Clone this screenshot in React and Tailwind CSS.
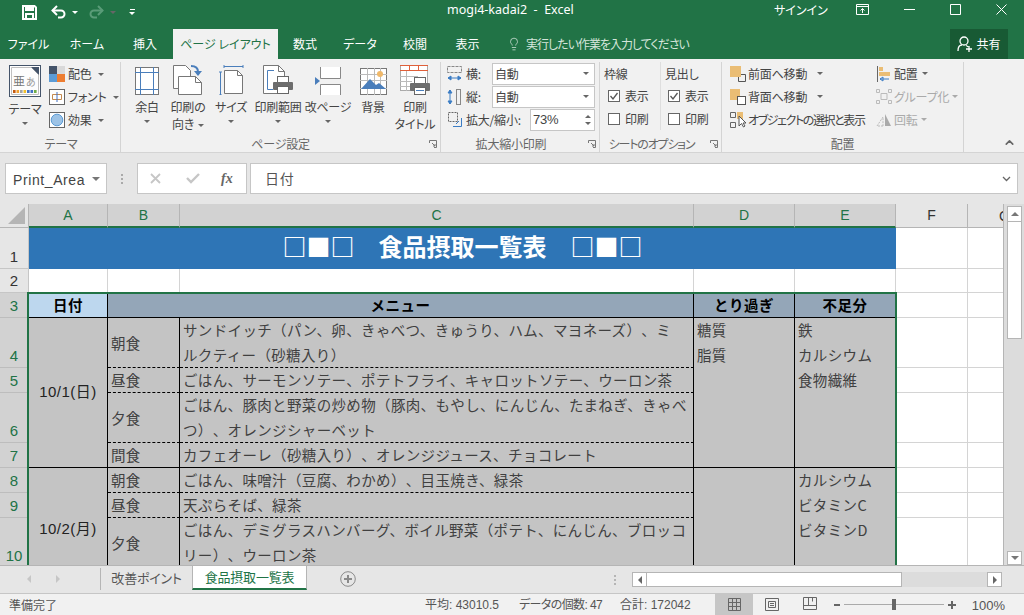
import { ChevronUp, Lightbulb } from 'lucide-react';

const JP = "font-['Noto_Sans_CJK_JP','Noto_Sans',sans-serif]";
const PALT = "[font-feature-settings:'palt']";
const COLS = 'grid-cols-[29px_79px_72px_514px_101px_101px_72px_35px]';

function Caret({ className = '' }) {
  return <span className={`inline-block w-0 h-0 border-x-[3px] border-x-transparent border-t-[3px] border-t-[#666] align-middle ${className}`} />;
}

function SaveIcon() {
  return (
    <svg width="15" height="15" viewBox="0 0 15 15" fill="none" stroke="#fff" strokeWidth="2">
      <path d="M1 1h11.500l1.500 1.500V14H1z" />
      <path d="M4 1v4h7V1" fill="#fff" />
      <path d="M4 14V9h7v5" />
    </svg>
  );
}

function UndoIcon({ color = '#fff', flip }) {
  return (
    <svg className={flip ? '-scale-x-100' : ''} width="16" height="14" viewBox="0 0 16 14" fill="none" stroke={color} strokeWidth="2">
      <path d="M1.500 5.500h8.500a3.500 3.500 0 0 1 0 7H7" />
      <path d="M6 1 1.500 5.500 6 10" />
    </svg>
  );
}

function ThemeIcon() {
  return (
    <svg width="32" height="32" viewBox="0 0 32 32">
      <rect x="0.500" y="0.500" width="31" height="31" fill="#fff" stroke="#44546a" />
      <path d="M2.500 2.500h20l7 7v20h-27z" fill="#fdfdfd" stroke="#c0c0c0" />
      <path d="M22 2h8v8z" fill="#44546a" />
      <text x="4" y="21" fontSize="12" fill="#777">亜</text>
      <text x="17" y="21" fontSize="10" fill="#999">あ</text>
      {['#c55a11', '#f0a030', '#a5a5a5', '#f0c030', '#4472c4', '#4472c4', '#70ad47'].map((c, i) => (
        <rect key={i} x={4 + i * 3.500} y="25" width="2.600" height="3" fill={c} />
      ))}
    </svg>
  );
}

function ColorIcon() {
  return (
    <svg width="16" height="16" viewBox="0 0 16 16">
      <rect width="8" height="8" fill="#44546a" />
      <rect x="8" width="8" height="8" fill="#d9d9d9" />
      <rect y="8" width="8" height="8" fill="#5b9bd5" />
      <rect x="8" y="8" width="8" height="8" fill="#ed7d31" />
    </svg>
  );
}

function FontIcon() {
  return (
    <svg width="16" height="16" viewBox="0 0 16 16" fill="none">
      <rect x="0.500" y="0.500" width="15" height="15" fill="#fff" stroke="#666" />
      <path d="M3.500 5.500h9v5h-9z" stroke="#c58a50" />
      <path d="M8 3v10" stroke="#4472c4" />
    </svg>
  );
}

function EffectIcon() {
  return (
    <svg width="16" height="16" viewBox="0 0 16 16">
      <rect x="0.500" y="0.500" width="15" height="15" fill="#fff" stroke="#666" />
      <circle cx="8" cy="8" r="5.800" fill="#9dc3e6" stroke="#5b9bd5" />
    </svg>
  );
}

function MarginIcon() {
  return (
    <svg width="24" height="28" viewBox="0 0 24 28" fill="#fff">
      <rect x="0.500" y="0.500" width="23" height="27" stroke="#777" />
      <path d="M5.500 0v28M18.500 0v28M0 5.500h24M0 22.500h24" stroke="#4a7ebb" fill="none" />
    </svg>
  );
}

function OrientIcon() {
  return (
    <svg width="30" height="30" viewBox="0 0 30 30" fill="#fff" stroke="#777">
      <path d="M.500.500h12l5 5v18H.500z" />
      <path d="M5.500 11.500h17l6 6v12h-23z" />
      <path d="M22.500 11.500v6h6" fill="none" />
      <path d="M18 1c4 0 7 1 7 6" stroke="#4a7ebb" strokeWidth="2" fill="none" />
      <path d="M21 6h8l-4 5z" fill="#4a7ebb" stroke="none" />
    </svg>
  );
}

function SizeIcon() {
  return (
    <svg width="25" height="30" viewBox="0 0 25 30" fill="none">
      <path d="M5 1.500h19M5 0v3M24 0v3M1.500 7v23M0 7h3M0 30h3" stroke="#4a7ebb" />
      <path d="M5.500 5.500h13l5 5v18h-18z" fill="#fff" stroke="#777" />
      <path d="M18.500 5.500v5h5" stroke="#777" />
    </svg>
  );
}

function Printer({ x, y, line }) {
  return (
    <g transform={`translate(${x} ${y})`}>
      <rect x="4.500" y="0.500" width="11" height="6" fill="#fff" stroke="#666" />
      <rect x="0" y="6" width="20" height="8" rx="1" fill="#6d6d6d" />
      <rect x="4.500" y="10.500" width="11" height="7" fill="#fff" stroke="#666" />
      {line && <path d="M6 13.500h8" stroke="#4a7ebb" />}
    </g>
  );
}

function PrintAreaIcon() {
  return (
    <svg width="31" height="30" viewBox="0 0 31 30" fill="none">
      <path d="M.500.500h15l6 6v22H.500z" fill="#fff" stroke="#777" />
      <path d="M15.500.500v6h6" stroke="#777" />
      <path d="M11 5.500H4.500v19H10" stroke="#4a7ebb" />
      <Printer x={10} y={11} />
    </svg>
  );
}

function BreakIcon() {
  return (
    <svg width="26" height="28" viewBox="0 0 26 28" fill="#fff" stroke="#888">
      <path d="M5.500 0v11.500h20V0M5.500 28V17.500h20V28" />
      <path d="M0 10l5 4-5 4z" fill="#4a7ebb" stroke="none" />
    </svg>
  );
}

function BackgroundIcon() {
  return (
    <svg width="27" height="27" viewBox="0 0 27 27">
      <rect x="0.500" y="0.500" width="26" height="26" fill="#fff" stroke="#777" />
      <path d="M0 6.500h27M0 12.500h27M0 20.500h27M7.500 0v27M14.500 0v27M20.500 0v27" stroke="#bbb" />
      <circle cx="20" cy="6" r="3" fill="#f0b869" />
      <path d="M1 21 10 11l6 6 3-2 7 6z" fill="#4a7ebb" />
    </svg>
  );
}

function TitlesIcon() {
  return (
    <svg width="30" height="30" viewBox="0 0 30 30" fill="none">
      <rect x="0.500" y="0.500" width="27" height="25" fill="#fff" stroke="#aaa" />
      <path d="M0 .500h28M0 5.500h28M9.500 0v6M18.500 0v6" stroke="#e0603a" />
      <path d="M0 11.500h18M0 16.500h12M0 21.500h10M6.500 6v20" stroke="#bbb" />
      <Printer x={10} y={12} line />
    </svg>
  );
}

function BigButton({ icon, lines, caretInline, caretBelow, width, iconH = 'h-[33px]' }) {
  return (
    <div className={`flex flex-col items-center shrink-0 ${width}`}>
      <div className={`${iconH} flex items-end justify-center`}>{icon}</div>
      <div className="mt-[3px] text-[12px] leading-[17px] text-[#444] text-center whitespace-nowrap">
        {lines.map((l, i) => (
          <div key={l}>
            {l}
            {caretInline && i === lines.length - 1 && <Caret className="ml-1" />}
          </div>
        ))}
        {caretBelow && <div className="h-[13px] flex items-center justify-center"><Caret /></div>}
      </div>
    </div>
  );
}

function RibbonGroup({ label, labelClass = '', width, launcher, children, className = '' }) {
  return (
    <div className={`relative shrink-0 h-[90px] border-r border-[#d4d4d4] ${width} ${className}`}>
      {children}
      <div className={`absolute bottom-0 inset-x-0 text-center text-[12px] leading-[16px] text-[#666] whitespace-nowrap ${labelClass}`}>{label}</div>
      {launcher && (
        <svg className="absolute right-[3px] bottom-[4px]" width="8" height="8" viewBox="0 0 8 8" fill="none" stroke="#777">
          <path d="M.500 3V.500H7.500V7.500H5M3 3l3 3M6 4v2H4" />
        </svg>
      )}
    </div>
  );
}

function Check({ checked, label }) {
  return (
    <div className="flex items-center gap-[5px] h-[23px] text-[12px] text-[#444] whitespace-nowrap">
      <span className="w-[12px] h-[12px] border border-[#666] bg-white flex items-center justify-center">
        {checked && (
          <svg width="10" height="10" viewBox="0 0 10 10" fill="none" stroke="#555" strokeWidth="1.300"><path d="M1.500 5l2.500 3 4.500-6" /></svg>
        )}
      </span>
      {label}
    </div>
  );
}

function AutoSelect({ label, icon }) {
  return (
    <div className="flex items-center h-[23px] text-[12px] text-[#444]">
      <span className="w-[19px] flex">{icon}</span>
      <span className="w-[26px]">{label}</span>
      <span className="w-[103px] h-[22px] bg-white border border-[#c6c6c6] flex items-center justify-between pl-[2px] pr-[5px]">
        自動<Caret />
      </span>
    </div>
  );
}

function ArrangeRow({ icon, label, caret, muted, labelClass = '' }) {
  return (
    <div className={`flex items-center h-[23px] text-[12px] whitespace-nowrap ${muted ? 'text-[#aaa]' : 'text-[#444]'}`}>
      <span className="w-[16px] flex justify-center mr-[2px]">{icon}</span>
      <span className={labelClass}>{label}</span>
      {caret && <Caret className={caret} />}
    </div>
  );
}

function Ribbon() {
  return (
    <div className={`h-[94px] bg-[#f1f1f1] border-b border-[#d4d4d4] flex pt-[3px] pl-[2px] relative tracking-[-0.2px] ${PALT} ${JP}`}>
      <RibbonGroup label="テーマ" width="w-[119px]" className="flex">
        <BigButton icon={<ThemeIcon />} lines={['テーマ']} caretBelow width="w-[46px]" iconH="h-[35px]" />
        <div className="flex flex-col pt-[4px] ml-[1px] text-[12px] text-[#444] gap-[7px] whitespace-nowrap">
          <div className="flex items-center gap-[3px] h-[16px]"><ColorIcon />配色<Caret className="ml-[3px]" /></div>
          <div className="flex items-center gap-[3px] h-[16px]"><FontIcon />フォント<Caret className="ml-[3px]" /></div>
          <div className="flex items-center gap-[3px] h-[16px]"><EffectIcon />効果<Caret className="ml-[3px]" /></div>
        </div>
      </RibbonGroup>
      <RibbonGroup label="ページ設定" width="w-[320px]" launcher className="flex pl-[4px]">
        <BigButton icon={<MarginIcon />} lines={['余白']} caretBelow width="w-[44px]" />
        <BigButton icon={<OrientIcon />} lines={['印刷の', '向き']} caretInline width="w-[38px]" />
        <BigButton icon={<SizeIcon />} lines={['サイズ']} caretBelow width="w-[48px]" />
        <BigButton icon={<PrintAreaIcon />} lines={['印刷範囲']} caretBelow width="w-[46px]" />
        <BigButton icon={<BreakIcon />} lines={['改ページ']} caretBelow width="w-[54px]" />
        <BigButton icon={<BackgroundIcon />} lines={['背景']} width="w-[36px]" />
        <BigButton icon={<TitlesIcon />} lines={['印刷', 'タイトル']} width="w-[48px]" />
      </RibbonGroup>
      <RibbonGroup label="拡大縮小印刷" labelClass="pr-[18px]" width="w-[159px]" launcher className="pl-[6px]">
        <AutoSelect
          label="横:"
          icon={<svg width="15" height="17" viewBox="0 0 15 17" fill="none"><path d="M.500 1.500h14v6H.500z" stroke="#888" strokeDasharray="3 1" /><path d="M1 13h13M1 13l3-2v4zM14 13l-3-2v4z" stroke="#3b7cc4" fill="#3b7cc4" /></svg>}
        />
        <AutoSelect
          label="縦:"
          icon={<svg width="15" height="17" viewBox="0 0 15 17" fill="none"><rect x="9.500" y="1.500" width="4" height="15" stroke="#888" /><path d="M3 2v14M3 2 1 5h4zM3 16l-2-3h4z" stroke="#3b7cc4" fill="#3b7cc4" /></svg>}
        />
        <div className="flex items-center h-[23px] text-[12px] text-[#444] whitespace-nowrap">
          <svg className="ml-[1px] mr-[4px]" width="14" height="15" viewBox="0 0 14 15" fill="none"><path d="M.500.500h9v9h-9z" stroke="#666" strokeDasharray="2 1" /><path d="M13.500 6v8.500H5M8 12l3-3" stroke="#3b7cc4" /></svg>
          <span className="w-[64px]">拡大/縮小:</span>
          <span className="w-[65px] h-[22px] bg-white border border-[#c6c6c6] flex items-center justify-between pl-[2px] pr-[3px] font-['Liberation_Sans',sans-serif] text-[13px]">
            73%
            <span className="flex flex-col gap-[4px]">
              <span className="w-0 h-0 border-x-[3px] border-x-transparent border-b-[3px] border-b-[#666]" />
              <Caret />
            </span>
          </span>
        </div>
      </RibbonGroup>
      <RibbonGroup label="シートのオプション" labelClass="pr-[18px] tracking-[-1.2px]" width="w-[122px]" launcher className="flex pl-[4px]">
        <div className="w-[57px] border-r border-[#dedede] h-[68px]">
          <div className="h-[22px] text-[12px] leading-[24px] text-[#444]">枠線</div>
          <div className="pl-[4px]"><Check checked label="表示" /><Check label="印刷" /></div>
        </div>
        <div className="pl-[4px]">
          <div className="h-[22px] text-[12px] leading-[24px] text-[#444] whitespace-nowrap">見出し</div>
          <div className="pl-[3px]"><Check checked label="表示" /><Check label="印刷" /></div>
        </div>
      </RibbonGroup>
      <RibbonGroup label="配置" width="w-[242px]" className="flex pl-[8px]">
        <div className="w-[146px]">
          <ArrangeRow
            label="前面へ移動"
            caret="ml-[10px]"
            icon={<svg width="16" height="16" viewBox="0 0 16 16"><path d="M8.500 11v4.500H15.500v-7H11" fill="none" stroke="#555" /><rect width="11" height="11" fill="#eabd74" /></svg>}
          />
          <ArrangeRow
            label="背面へ移動"
            caret="ml-[10px]"
            icon={<svg width="16" height="16" viewBox="0 0 16 16"><rect width="10" height="11" fill="#eabd74" /><rect x="7.500" y="7.500" width="8" height="8" fill="#fff" stroke="#555" /></svg>}
          />
          <ArrangeRow
            label="オブジェクトの選択と表示"
            labelClass="tracking-[-1.4px]"
            icon={<svg width="16" height="16" viewBox="0 0 16 16" fill="none"><path d="M.500.500h5v5h-5zM.500 10.500h5v5h-5z" stroke="#666" /><rect x="7" y="0" width="6" height="7" fill="#eabd74" /><path d="M9 4v10l2.500-2.500 2 3.500 1.500-1-2-3h3z" fill="#fff" stroke="#555" /></svg>}
          />
        </div>
        <div>
          <ArrangeRow
            label="配置"
            caret="ml-[4px]"
            icon={<svg width="14" height="16" viewBox="0 0 14 16" fill="none"><path d="M.500 0v16" stroke="#666" /><rect x="2" y="1" width="4" height="4" fill="#eabd74" /><rect x="2" y="6" width="11" height="4" fill="#eabd74" /><path d="M3 13h9M3 13l3-2v4z" stroke="#3b7cc4" /></svg>}
          />
          <ArrangeRow
            muted
            label="グループ化"
            caret="ml-[3px] border-t-[#aaa]"
            icon={<svg width="16" height="15" viewBox="0 0 16 15" fill="none" stroke="#bbb"><path d="M.500.500h3v3h-3zM12.500.500h3v3h-3zM.500 11.500h3v3h-3zM12.500 11.500h3v3h-3zM5 4.500h6v6H5z" /></svg>}
          />
          <ArrangeRow
            muted
            label="回転"
            caret="ml-[3px] border-t-[#aaa]"
            icon={<svg width="16" height="14" viewBox="0 0 16 14"><path d="M9 13V1l6 12z" fill="#aaa" /><path d="M7 13H1l6-9z" fill="none" stroke="#bbb" strokeDasharray="2 1" /></svg>}
          />
        </div>
      </RibbonGroup>
      <ChevronUp className="absolute right-[8px] bottom-[3px] text-[#666]" size={13} strokeWidth={3} />
    </div>
  );
}

function TitleBar() {
  return (
    <div className="h-[29px] bg-[#217346] flex items-center text-white relative">
      <div className="flex items-center pl-[22px] -mt-[5px]">
        <SaveIcon />
        <span className="ml-[14px]"><UndoIcon /></span>
        <Caret className="ml-[5px] border-t-white" />
        <span className="ml-[10px]"><UndoIcon flip color="#5a9c78" /></span>
        <Caret className="ml-[6px] border-t-[#5a9c78]" />
        <span className="ml-[13px] flex flex-col items-center gap-[2px]">
          <span className="w-[5px] h-px bg-white" />
          <Caret className="border-t-white" />
        </span>
      </div>
      <div className="absolute left-[447px] top-0 text-[12.5px] leading-[19px] font-['Noto_Sans',sans-serif] whitespace-pre">mogi4-kadai2  -  Excel</div>
      <div className={`absolute left-[774px] top-0 text-[12px] leading-[19px] ${PALT} ${JP}`}>サインイン</div>
      <svg className="absolute left-[856px] top-[4px]" width="13" height="11" viewBox="0 0 13 11" fill="none" stroke="#fff"><path d="M.500.500h12v10H.500zM.500 2.500h12M6.500 9V4.500M4.500 6.500l2-2 2 2" /></svg>
      <svg className="absolute left-[904px] top-[9px]" width="11" height="1" viewBox="0 0 11 1" stroke="#fff"><path d="M0 .500h11" /></svg>
      <svg className="absolute left-[950px] top-[4px]" width="11" height="11" viewBox="0 0 11 11" fill="none" stroke="#fff"><path d="M.500.500h10v10H.500z" /></svg>
      <svg className="absolute left-[996px] top-[4px]" width="11" height="11" viewBox="0 0 11 11" fill="none" stroke="#fff"><path d="M.500.500l10 10M10.500.500l-10 10" /></svg>
    </div>
  );
}

const TABS = [
  { label: 'ファイル', w: 'w-[57px]' },
  { label: 'ホーム', w: 'w-[60px]' },
  { label: '挿入', w: 'w-[56px]' },
];
const TABS_RIGHT = [
  { label: '数式', w: 'w-[54px]' },
  { label: 'データ', w: 'w-[56px]' },
  { label: '校閲', w: 'w-[54px]' },
  { label: '表示', w: 'w-[51px]' },
];

function TabRow() {
  return (
    <div className={`h-[30px] bg-[#217346] flex items-stretch text-[12px] text-white ${PALT} ${JP}`}>
      {TABS.map((t) => (
        <div key={t.label} className={`${t.w} flex items-center justify-center`}>{t.label}</div>
      ))}
      <div className="w-[105px] bg-[#f1f1f1] text-[#217346] flex items-center justify-center whitespace-nowrap">ページ レイアウト</div>
      {TABS_RIGHT.map((t) => (
        <div key={t.label} className={`${t.w} flex items-center justify-center`}>{t.label}</div>
      ))}
      <div className="flex items-center text-[#d5e5db] ml-[14px] whitespace-nowrap">
        <Lightbulb size={14} strokeWidth={1.300} className="mr-[5px]" />
        <span className="tracking-[-1px]">実行したい作業を入力してください</span>
      </div>
      <div className="ml-auto mr-[16px] w-[58px] bg-[#185a34] flex items-center justify-center gap-[3px]">
        <svg width="16" height="16" viewBox="0 0 16 16" fill="none" stroke="#fff" strokeWidth="1.300"><circle cx="7" cy="5" r="4" /><path d="M1 15c0-4 2-6 4-6M9 9.500c1 .3 1.500.6 2 1.500M9 13h6M12 10v6" /></svg>
        共有
      </div>
    </div>
  );
}

function FormulaBar() {
  return (
    <div className="h-[51px] bg-[#e6e6e6] flex items-start pt-[10px] pl-[5px] pr-[6px]">
      <div className="w-[102px] h-[31px] bg-white border border-[#c6c6c6] flex items-center justify-between pl-[7px] pr-[6px] text-[14px] text-[#444] font-['Liberation_Sans',sans-serif] tracking-[0.6px]">
        <span className="pt-[3px]">Print_Area</span>
        <span className="w-0 h-0 border-x-[4px] border-x-transparent border-t-[4px] border-t-[#777]" />
      </div>
      <div className="w-[30px] h-[31px] flex items-center justify-center">
        <span className="flex flex-col gap-[2px]">
          <span className="w-[2px] h-[2px] bg-[#aaa]" /><span className="w-[2px] h-[2px] bg-[#aaa]" /><span className="w-[2px] h-[2px] bg-[#aaa]" />
        </span>
      </div>
      <div className="w-[110px] h-[31px] bg-white border border-[#c6c6c6] flex items-center">
        <svg className="ml-[12px]" width="11" height="11" viewBox="0 0 11 11" stroke="#c6c6c6" strokeWidth="1.800" fill="none"><path d="M1 1l9 9M10 1l-9 9" /></svg>
        <svg className="ml-[25px]" width="14" height="11" viewBox="0 0 14 11" stroke="#c6c6c6" strokeWidth="2.400" fill="none"><path d="M1 5l4 4 8-8" /></svg>
        <span className="ml-[21px] text-[14px] italic font-bold text-[#666] font-['Liberation_Serif',serif]">fx</span>
      </div>
      <div className={`ml-[3px] flex-1 h-[31px] bg-white border border-[#c6c6c6] flex items-center pl-[14px] pr-[6px] justify-between text-[14px] text-[#555] tracking-[0.8px] ${JP}`}>
        日付
        <svg width="9" height="6" viewBox="0 0 9 6" fill="none" stroke="#666" strokeWidth="1.300"><path d="M1 1l3.500 3.500L8 1" /></svg>
      </div>
    </div>
  );
}

function ColumnHead({ label, active }) {
  return (
    <div className={`h-[24px] flex items-center justify-center border-r border-[#b5b5b5] text-[14px] font-['Liberation_Sans',sans-serif] ${active ? 'bg-[#d2d2d2] text-[#217346] border-b-2 border-b-[#217346]' : 'bg-[#e6e6e6] text-[#333] border-b border-b-[#b5b5b5]'}`}>{label}</div>
  );
}

function RowHead({ n, active }) {
  return (
    <div className={`flex items-end justify-center pb-[3px] border-b border-r text-[15px] leading-[17px] font-['Liberation_Sans',sans-serif] ${active ? 'bg-[#d2d2d2] text-[#217346] border-[#bdbdbd]' : 'bg-[#e6e6e6] text-[#333] border-[#c6c6c6]'}`}>
      {n}
    </div>
  );
}

function BlankCells({ last }) {
  return (
    <>
      <div className={`border-r border-[#d4d4d4] ${last ? '' : 'border-b'}`} />
      <div className={`border-[#d4d4d4] ${last ? '' : 'border-b'}`} />
    </>
  );
}

const TEXT = 'text-[14.5px] text-[#404040] whitespace-nowrap tracking-[0.35px] [text-spacing-trim:space-all]';
const CELL = 'bg-[#c4c4c4] px-[3px] border-r border-black overflow-hidden';
const DASHED = 'border-b border-b-black [border-bottom-style:dashed]';
const LINE = `${TEXT} leading-[23px] h-[25px]`;
const HEAD = 'bg-[#94a6b8] border-r border-b border-black flex items-center justify-center text-[14.5px] font-bold text-black tracking-[0.5px]';
const DATE = "text-[15px] text-[#222] tracking-[0.5px] font-['Liberation_Sans','Noto_Sans_CJK_JP',sans-serif]";

function Sheet() {
  return (
    <div className={`h-[361px] relative overflow-hidden bg-white border-r border-[#b5b5b5] ${JP}`}>
      <div className={`grid ${COLS} grid-rows-[24px_41px_24px_25px_50px_25px_50px_25px_25px_25px_50px]`}>
        <div className="bg-[#e6e6e6] border-r border-b border-[#b5b5b5] flex items-end justify-end pr-[3px] pb-[3px]">
          <span className="w-0 h-0 border-l-[17px] border-l-transparent border-b-[17px] border-b-[#b5b5b5]" />
        </div>
        {['A', 'B', 'C', 'D', 'E'].map((c) => <ColumnHead key={c} label={c} active />)}
        <ColumnHead label="F" />
        <div className="h-[24px] bg-[#e6e6e6] border-b border-b-[#b5b5b5] text-[14px] text-[#333] font-['Liberation_Sans',sans-serif] pl-[31px] leading-[24px] overflow-hidden">G</div>

        <RowHead n="1" />
        <div className="col-span-5 bg-[#2e75b6] text-white text-[24px] font-bold flex items-center justify-center pb-[5px] whitespace-pre">□■□　食品摂取一覧表　□■□</div>
        <BlankCells />

        <RowHead n="2" />
        {[0, 1, 2, 3, 4].map((i) => <div key={i} className="border-r border-b border-[#d4d4d4]" />)}
        <BlankCells />

        <RowHead n="3" active />
        <div className="bg-[#bdd7ee] border-r border-b border-black flex items-center justify-center text-[14.5px] font-bold text-black tracking-[0.5px]">日付</div>
        <div className={`col-span-2 ${HEAD}`}>メニュー</div>
        <div className={HEAD}>とり過ぎ</div>
        <div className={HEAD}>不足分</div>
        <BlankCells />

        <RowHead n="4" active />
        <div className={`${CELL} ${DATE} row-span-4 border-b border-b-black flex items-center justify-center`}>10/1(日)</div>
        <div className={`${CELL} ${TEXT} ${DASHED} flex items-center`}>朝食</div>
        <div className={`${CELL} ${DASHED}`}>
          <div className={`${LINE} tracking-[0.8px]`}>サンドイッチ（パン、卵、きゃべつ、きゅうり、ハム、マヨネーズ）、ミ</div>
          <div className={LINE}>ルクティー（砂糖入り）</div>
        </div>
        <div className={`${CELL} row-span-4 border-b border-b-black`}>
          <div className={LINE}>糖質</div>
          <div className={LINE}>脂質</div>
        </div>
        <div className={`${CELL} row-span-4 border-b border-b-black`}>
          <div className={LINE}>鉄</div>
          <div className={LINE}>カルシウム</div>
          <div className={LINE}>食物繊維</div>
        </div>
        <BlankCells />

        <RowHead n="5" active />
        <div className={`${CELL} ${TEXT} ${DASHED} flex items-center`}>昼食</div>
        <div className={`${CELL} ${DASHED}`}><div className={LINE}>ごはん、サーモンソテー、ポテトフライ、キャロットソテー、ウーロン茶</div></div>
        <BlankCells />

        <RowHead n="6" active />
        <div className={`${CELL} ${TEXT} ${DASHED} flex items-center`}>夕食</div>
        <div className={`${CELL} ${DASHED}`}>
          <div className={LINE}>ごはん、豚肉と野菜の炒め物（豚肉、もやし、にんじん、たまねぎ、きゃべ</div>
          <div className={LINE}>つ）、オレンジシャーベット</div>
        </div>
        <BlankCells />

        <RowHead n="7" active />
        <div className={`${CELL} ${TEXT} border-b border-b-black flex items-center`}>間食</div>
        <div className={`${CELL} border-b border-b-black`}><div className={LINE}>カフェオーレ（砂糖入り）、オレンジジュース、チョコレート</div></div>
        <BlankCells />

        <RowHead n="8" active />
        <div className={`${CELL} ${DATE} row-span-3 flex justify-center pt-[50px]`}>10/2(月)</div>
        <div className={`${CELL} ${TEXT} ${DASHED} flex items-center`}>朝食</div>
        <div className={`${CELL} ${DASHED}`}><div className={LINE}>ごはん、味噌汁（豆腐、わかめ）、目玉焼き、緑茶</div></div>
        <div className={`${CELL} row-span-3`} />
        <div className={`${CELL} row-span-3`}>
          <div className={LINE}>カルシウム</div>
          <div className={LINE}>ビタミンC</div>
          <div className={LINE}>ビタミンD</div>
        </div>
        <BlankCells />

        <RowHead n="9" active />
        <div className={`${CELL} ${TEXT} ${DASHED} flex items-center`}>昼食</div>
        <div className={`${CELL} ${DASHED}`}><div className={LINE}>天ぷらそば、緑茶</div></div>
        <BlankCells />

        <RowHead n="10" active />
        <div className={`${CELL} ${TEXT} flex items-center`}>夕食</div>
        <div className={CELL}>
          <div className={LINE}>ごはん、デミグラスハンバーグ、ボイル野菜（ポテト、にんじん、ブロッコ</div>
          <div className={LINE}>リー）、ウーロン茶</div>
        </div>
        <BlankCells last />
      </div>
      <div className="absolute left-[27px] top-[88px] w-[870px] h-[300px] border-2 border-[#217346] pointer-events-none" />
    </div>
  );
}

function VScroll() {
  return (
    <div className="w-[20px] bg-[#dcdcdc] flex flex-col pl-[3px] pr-[2px]">
      <div className="h-[16px] mt-[2px] bg-white border border-[#b5b5b5] flex items-center justify-center">
        <span className="w-0 h-0 border-x-[4px] border-x-transparent border-b-[4px] border-b-[#777]" />
      </div>
      <div className="h-[117px] bg-white border border-[#b5b5b5] border-t-0" />
      <div className="flex-1" />
      <div className="h-[14px] bg-white border border-[#b5b5b5] flex items-center justify-center">
        <span className="w-0 h-0 border-x-[4px] border-x-transparent border-t-[4px] border-t-[#777]" />
      </div>
    </div>
  );
}

function SheetTabs() {
  return (
    <div className={`h-[28px] bg-[#e6e6e6] border-t border-[#b5b5b5] flex items-start text-[13px] tracking-[-0.2px] relative ${PALT} ${JP}`}>
      <div className="w-[101px] h-[22px] mt-[2px] flex items-center pl-[27px] gap-[25px] border-r border-[#b5b5b5]">
        <span className="w-0 h-0 border-y-[4px] border-y-transparent border-r-[4px] border-r-[#c6c6c6]" />
        <span className="w-0 h-0 border-y-[4px] border-y-transparent border-l-[4px] border-l-[#c6c6c6]" />
      </div>
      <div className="w-[91px] h-[24px] flex items-center justify-center text-[#555]">改善ポイント</div>
      <div className="w-[115px] h-[24px] bg-white border-x border-[#b5b5b5] border-b-2 border-b-[#217346] text-[#217346] flex items-center justify-center">食品摂取一覧表</div>
      <svg className="ml-[33px] mt-[5px]" width="16" height="16" viewBox="0 0 16 16" fill="none" stroke="#8a8a8a"><circle cx="8" cy="8" r="7.300" /><path d="M4 8h8M8 4v8" strokeWidth="2" /></svg>
      <div className="absolute left-[614px] top-[9px] flex flex-col gap-[2px]">
        <span className="w-[2px] h-[2px] bg-[#b5b5b5]" /><span className="w-[2px] h-[2px] bg-[#b5b5b5]" /><span className="w-[2px] h-[2px] bg-[#b5b5b5]" />
      </div>
      <div className="absolute left-[632px] top-[6px] w-[370px] h-[15px] bg-[#dcdcdc] flex items-stretch">
        <div className="w-[15px] bg-white border border-[#b5b5b5] flex items-center justify-center">
          <span className="w-0 h-0 border-y-[4px] border-y-transparent border-r-[4px] border-r-[#666]" />
        </div>
        <div className="w-[255px] bg-white border-y border-r border-[#b5b5b5]" />
        <div className="flex-1" />
        <div className="w-[15px] bg-white border border-[#b5b5b5] flex items-center justify-center">
          <span className="w-0 h-0 border-y-[4px] border-y-transparent border-l-[4px] border-l-[#666]" />
        </div>
      </div>
    </div>
  );
}

function StatusBar() {
  return (
    <div className={`h-[22px] bg-[#f1f1f1] border-t border-[#c6c6c6] flex items-center text-[12px] text-[#555] relative ${PALT} ${JP}`}>
      <span className="ml-[9px]">準備完了</span>
      <div className="absolute left-[425px] top-0 h-[21px] flex items-center whitespace-nowrap font-['Liberation_Sans','Noto_Sans_CJK_JP',sans-serif]">
        <span className="w-[94px]">平均: 43010.5</span>
        <span className="w-[101px] tracking-[-0.6px]">データの個数: 47</span>
        <span>合計: 172042</span>
      </div>
      <div className="absolute left-[715px] top-0 w-[38px] h-[21px] bg-[#c6c6c6] flex items-center justify-center">
        <svg width="13" height="13" viewBox="0 0 13 13" fill="none" stroke="#666"><path d="M.500.500h12v12H.500zM.500 4.500h12M.500 8.500h12M4.500 .500v12M8.500 .500v12" /></svg>
      </div>
      <svg className="absolute left-[765px] top-[4px]" width="14" height="13" viewBox="0 0 14 13" fill="none" stroke="#666"><path d="M.500.500h13v12H.500zM3.500 3.500h7v6h-7zM5 5.500h4M5 7.500h4" /></svg>
      <svg className="absolute left-[803px] top-[3px]" width="14" height="13" viewBox="0 0 14 13" fill="none" stroke="#666"><path d="M.500.500h13v12H.500zM.500 8.500h13M5.500 .500v8M9.500 .500v4" /></svg>
      <span className="absolute left-[834px] top-[10px] w-[6px] h-[2px] bg-[#666]" />
      <div className="absolute left-[844px] top-[10px] w-[100px] h-px bg-[#aaa]" />
      <span className="absolute left-[892px] top-[5px] w-[4px] h-[11px] bg-[#666]" />
      <svg className="absolute left-[948px] top-[7px]" width="8" height="8" viewBox="0 0 8 8" stroke="#666" strokeWidth="2"><path d="M0 4h8M4 0v8" /></svg>
      <span className="absolute right-[19px] top-[2px] text-[13px] font-['Liberation_Sans',sans-serif]">100%</span>
    </div>
  );
}

export default function App() {
  return (
    <div className="w-[1024px] h-[615px] overflow-hidden bg-[#e6e6e6] flex flex-col">
      <TitleBar />
      <TabRow />
      <Ribbon />
      <FormulaBar />
      <div className="flex h-[361px]">
        <div className="w-[1004px]"><Sheet /></div>
        <VScroll />
      </div>
      <SheetTabs />
      <StatusBar />
    </div>
  );
}
